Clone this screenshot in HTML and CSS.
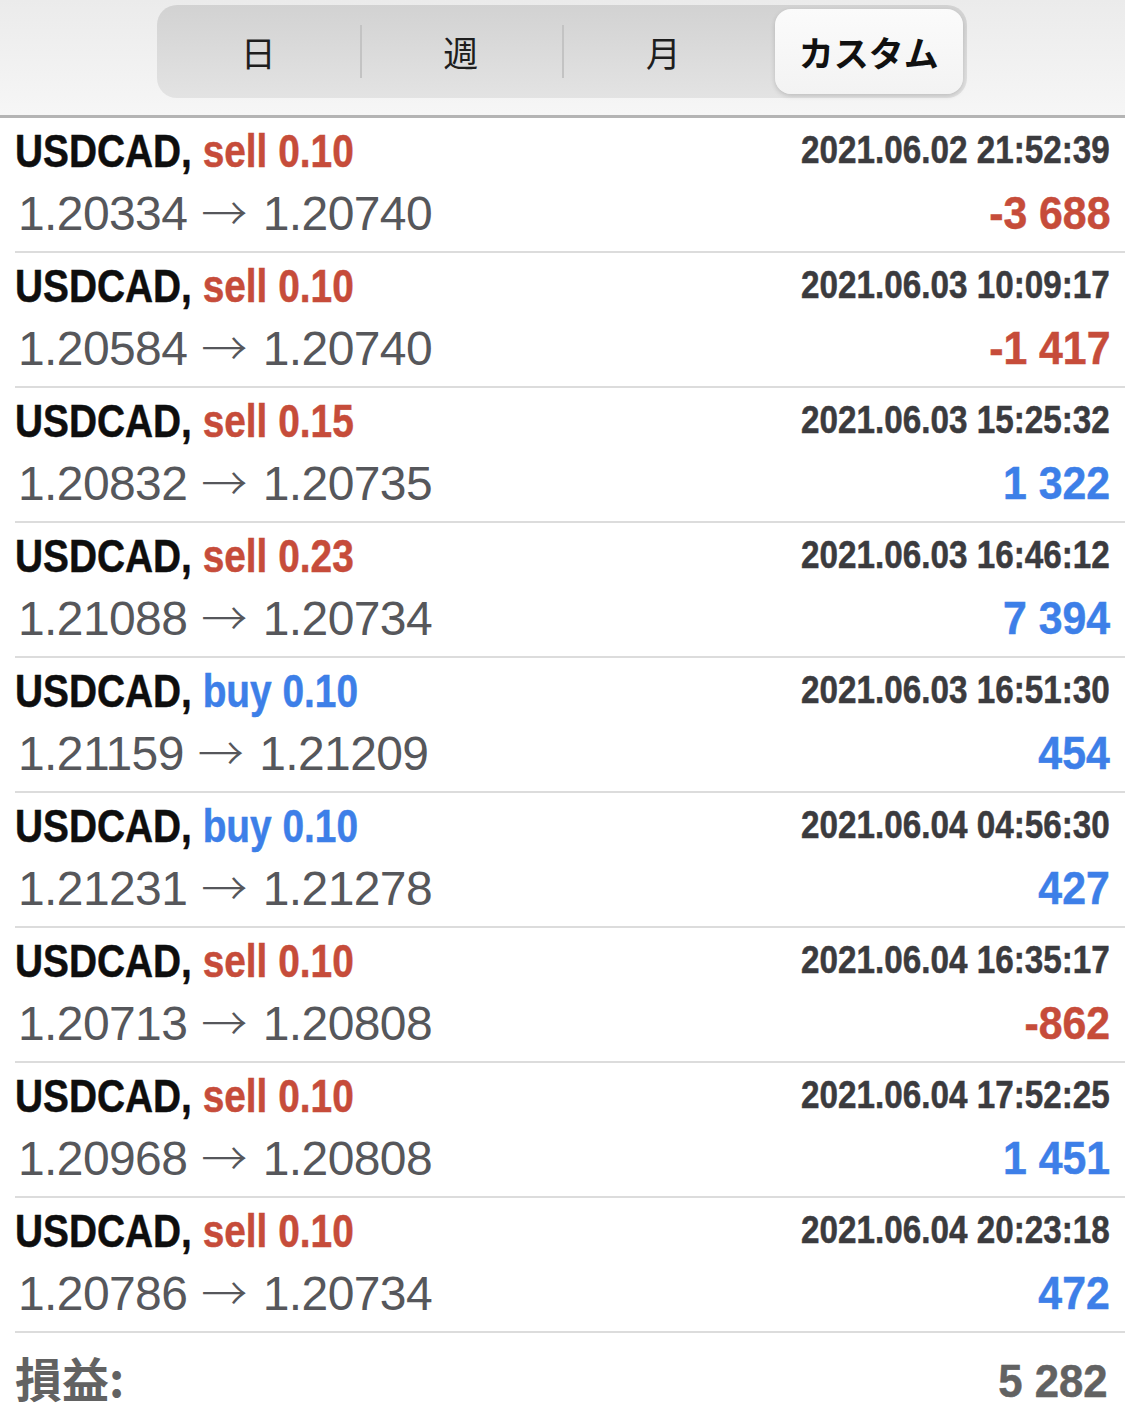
FILE: index.html
```html
<!DOCTYPE html>
<html>
<head>
  <meta charset="utf-8">
  <link rel="stylesheet" href="styles.css">
</head>
<body>
  <div class="header">
    <div class="segments">
      <div class="segment">日</div>
      <div class="segment">週</div>
      <div class="segment">月</div>
      <div class="segment active"><span class="pill">カスタム</span></div>
    </div>
  </div>

  <div class="deals">
    <div class="deal">
      <div class="deal-line">
        <span class="deal-title">USDCAD, <span class="sell">sell 0.10</span></span>
        <span class="deal-time">2021.06.02 21:52:39</span>
      </div>
      <div class="deal-line">
        <span class="deal-prices">1.20334<span class="arrow">→</span>1.20740</span>
        <span class="deal-profit loss">-3 688</span>
      </div>
    </div>
    <div class="deal">
      <div class="deal-line">
        <span class="deal-title">USDCAD, <span class="sell">sell 0.10</span></span>
        <span class="deal-time">2021.06.03 10:09:17</span>
      </div>
      <div class="deal-line">
        <span class="deal-prices">1.20584<span class="arrow">→</span>1.20740</span>
        <span class="deal-profit loss">-1 417</span>
      </div>
    </div>
    <div class="deal">
      <div class="deal-line">
        <span class="deal-title">USDCAD, <span class="sell">sell 0.15</span></span>
        <span class="deal-time">2021.06.03 15:25:32</span>
      </div>
      <div class="deal-line">
        <span class="deal-prices">1.20832<span class="arrow">→</span>1.20735</span>
        <span class="deal-profit gain">1 322</span>
      </div>
    </div>
    <div class="deal">
      <div class="deal-line">
        <span class="deal-title">USDCAD, <span class="sell">sell 0.23</span></span>
        <span class="deal-time">2021.06.03 16:46:12</span>
      </div>
      <div class="deal-line">
        <span class="deal-prices">1.21088<span class="arrow">→</span>1.20734</span>
        <span class="deal-profit gain">7 394</span>
      </div>
    </div>
    <div class="deal">
      <div class="deal-line">
        <span class="deal-title">USDCAD, <span class="buy">buy 0.10</span></span>
        <span class="deal-time">2021.06.03 16:51:30</span>
      </div>
      <div class="deal-line">
        <span class="deal-prices">1.21159<span class="arrow">→</span>1.21209</span>
        <span class="deal-profit gain">454</span>
      </div>
    </div>
    <div class="deal">
      <div class="deal-line">
        <span class="deal-title">USDCAD, <span class="buy">buy 0.10</span></span>
        <span class="deal-time">2021.06.04 04:56:30</span>
      </div>
      <div class="deal-line">
        <span class="deal-prices">1.21231<span class="arrow">→</span>1.21278</span>
        <span class="deal-profit gain">427</span>
      </div>
    </div>
    <div class="deal">
      <div class="deal-line">
        <span class="deal-title">USDCAD, <span class="sell">sell 0.10</span></span>
        <span class="deal-time">2021.06.04 16:35:17</span>
      </div>
      <div class="deal-line">
        <span class="deal-prices">1.20713<span class="arrow">→</span>1.20808</span>
        <span class="deal-profit loss">-862</span>
      </div>
    </div>
    <div class="deal">
      <div class="deal-line">
        <span class="deal-title">USDCAD, <span class="sell">sell 0.10</span></span>
        <span class="deal-time">2021.06.04 17:52:25</span>
      </div>
      <div class="deal-line">
        <span class="deal-prices">1.20968<span class="arrow">→</span>1.20808</span>
        <span class="deal-profit gain">1 451</span>
      </div>
    </div>
    <div class="deal">
      <div class="deal-line">
        <span class="deal-title">USDCAD, <span class="sell">sell 0.10</span></span>
        <span class="deal-time">2021.06.04 20:23:18</span>
      </div>
      <div class="deal-line">
        <span class="deal-prices">1.20786<span class="arrow">→</span>1.20734</span>
        <span class="deal-profit gain">472</span>
      </div>
    </div>
  </div>

  <div class="summary">
    <span class="summary-label">損益:</span>
    <span class="summary-value">5 282</span>
  </div>
</body>
</html>
```

FILE: styles.css
```css
* {
  margin: 0;
  padding: 0;
  box-sizing: border-box;
}

body {
  width: 1125px;
  height: 1412px;
  overflow: hidden;
  background: #ffffff;
  font-family: "Liberation Sans", "Noto Sans CJK JP", sans-serif;
  color: #111;
}

/* Period selector */
.header {
  height: 118px;
  padding: 5px 0 0 157px;
  background: linear-gradient(180deg, #ebebeb 0%, #f6f6f6 100%);
  border-bottom: 3px solid #b4b4b4;
}

.segments {
  display: flex;
  width: 810px;
  height: 93px;
  padding: 4px 0;
  border-radius: 20px;
  background: linear-gradient(180deg, #d2d2d2 0%, #e3e3e3 100%);
}

.segment {
  flex: 0 0 25%;
  display: flex;
  align-items: center;
  justify-content: center;
  font-family: "Noto Sans CJK JP", sans-serif;
  font-size: 35px;
  color: #1e1e1e;
  position: relative;
}

.segment + .segment::before {
  content: '';
  position: absolute;
  left: 0;
  top: 16px;
  bottom: 16px;
  width: 2px;
  background: #c3c3c3;
}

.segment.active {
  padding: 0 4px 0 10px;
}

.segment.active::before {
  display: none;
}

.pill {
  flex: 1;
  align-self: stretch;
  display: flex;
  align-items: center;
  justify-content: center;
  background: linear-gradient(180deg, #fbfbfb 0%, #f3f3f3 100%);
  border-radius: 16px;
  font-weight: 700;
  color: #111;
  box-shadow: 0 2px 5px rgba(0, 0, 0, 0.16);
}

/* Deal rows */
.deals {
  margin-left: 15px;
}

.deal {
  height: 135px;
  padding: 3px 15px 0 0;
  border-bottom: 2px solid #dcdcdc;
}

.deal-line {
  display: flex;
  justify-content: space-between;
  align-items: flex-start;
}

/* narrow bold face: squeeze Liberation Sans Bold */
.deal-title,
.deal-time,
.deal-profit,
.summary-value {
  display: inline-block;
  font-weight: 700;
  white-space: nowrap;
  -webkit-text-stroke: 0.5px currentColor;
}

.deal-title {
  font-size: 47px;
  line-height: 60px;
  color: #0e0e0e;
  transform: scaleX(0.826);
  transform-origin: left center;
}

.sell {
  color: #c64c3a;
}

.buy {
  color: #3d7fe8;
}

.deal-time {
  font-size: 38px;
  line-height: 58px;
  color: #3b3b3e;
  transform: scaleX(0.875);
  transform-origin: right center;
}

.deal-prices {
  padding-left: 3px;
  font-size: 48px;
  line-height: 58px;
  letter-spacing: -0.6px;
  color: #56575b;
  white-space: nowrap;
}

.arrow {
  margin: 0 16px 0 14px;
  font-family: "Noto Sans CJK JP", sans-serif;
  font-weight: 300;
  font-size: 46px;
}

.deal-profit {
  font-size: 46px;
  line-height: 64px;
  transform: scaleX(0.93);
  transform-origin: right center;
}

.deal-profit.loss {
  color: #c64c3a;
}

.deal-profit.gain {
  color: #3d7fe8;
}

/* Total */
.summary {
  display: flex;
  justify-content: space-between;
  align-items: baseline;
  padding: 9px 17px 0 15px;
  font-size: 47px;
  color: #626262;
}

.summary-label {
  font-family: "Noto Sans CJK JP", sans-serif;
  font-weight: 700;
  font-size: 47px;
}

.summary-value {
  transform: scaleX(0.93);
  transform-origin: right center;
}
```
